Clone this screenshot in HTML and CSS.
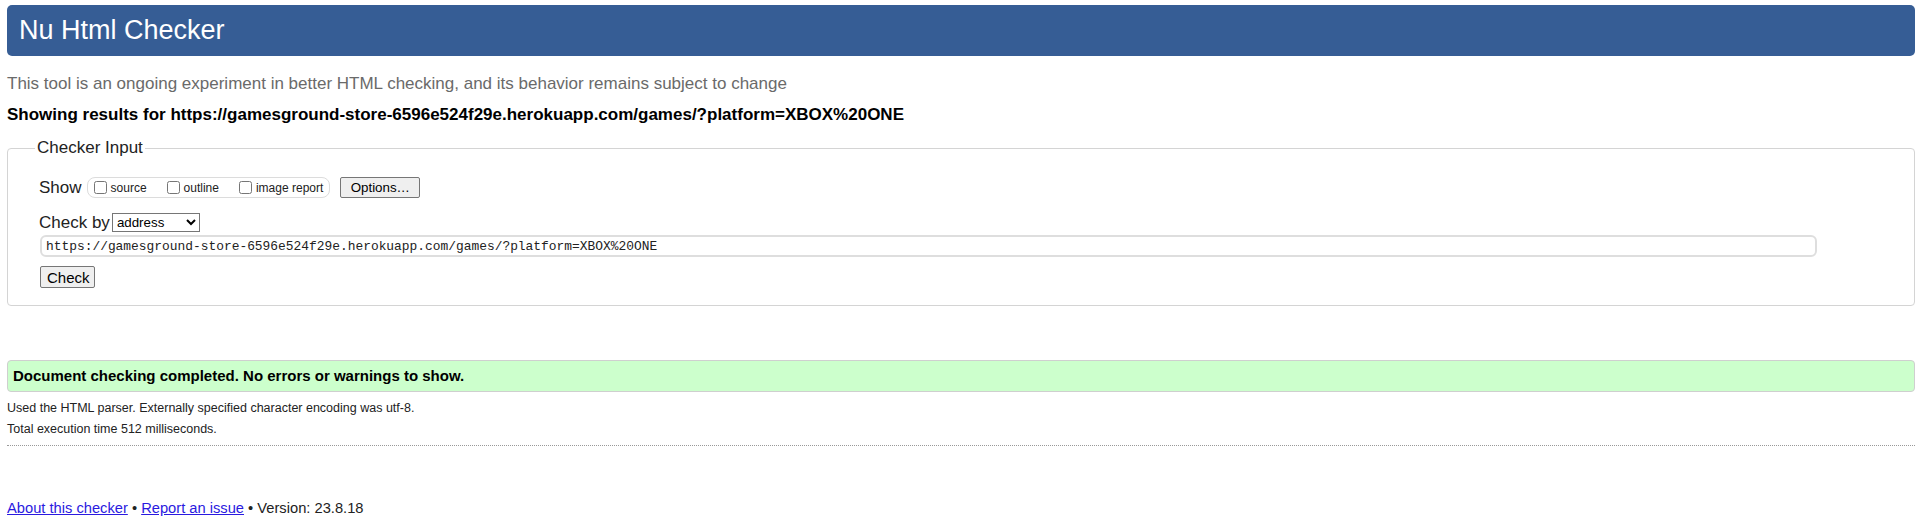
FILE: index.html
```html
<!DOCTYPE html>
<html lang="en">
<head>
<meta charset="utf-8">
<title>Nu Html Checker</title>
<link rel="stylesheet" href="styles.css">
</head>
<body>
<h1 class="title">Nu Html Checker</h1>
<p class="intro">This tool is an ongoing experiment in better HTML checking, and its behavior remains subject to change</p>
<p class="showing">Showing results for https://gamesground-store-6596e524f29e.herokuapp.com/games/?platform=XBOX%20ONE</p>
<form class="checker">
  <fieldset class="input-set">
    <legend class="legend">Checker Input</legend>
    <div class="row row-show">
      <span class="label">Show</span>
      <span class="show-group">
        <label class="opt"><input type="checkbox" class="cb">source</label>
        <label class="opt"><input type="checkbox" class="cb">outline</label>
        <label class="opt"><input type="checkbox" class="cb">image report</label>
      </span>
      <button type="button" class="btn btn-options">Options…</button>
    </div>
    <div class="row row-by">
      <span class="label">Check by</span>
      <select class="sel"><option>address</option></select>
    </div>
    <div class="row row-url">
      <input class="url" type="text" value="https://gamesground-store-6596e524f29e.herokuapp.com/games/?platform=XBOX%20ONE">
    </div>
    <div class="row row-check">
      <button type="button" class="btn btn-check">Check</button>
    </div>
  </fieldset>
</form>
<p class="success">Document checking completed. No errors or warnings to show.</p>
<p class="details">Used the HTML parser. Externally specified character encoding was utf-8.</p>
<p class="details">Total execution time 512 milliseconds.</p>
<hr class="sep">
<p class="footer"><a href="#">About this checker</a> • <a href="#">Report an issue</a> • Version: 23.8.18</p>
</body>
</html>
```
FILE: styles.css
```css
* { box-sizing: border-box; }
html, body { background: #fff; }
body {
  margin: 0;
  padding: 0 5px 0 7px;
  font-family: "Liberation Sans", Arial, sans-serif;
  font-size: 16px;
  color: #000;
}
.title {
  margin: 5px 0 0;
  height: 51px;
  line-height: 51px;
  padding: 0 12px;
  background: #365d95;
  color: #fff;
  font-size: 27px;
  font-weight: normal;
  border-radius: 5px;
}
.intro {
  margin: 18px 0 0;
  font-size: 17px;
  line-height: 20px;
  color: #6a6a6a;
}
.showing {
  margin: 11px 0 0;
  font-size: 17px;
  line-height: 20px;
  font-weight: bold;
}
.checker { margin: 13px 0 0; }
.input-set {
  margin: 0;
  border: 1px solid #d4d4d4;
  border-radius: 4px;
  padding: 19px 10px 17px 31px;
}
.legend {
  padding: 0 2px;
  margin-left: -4px;
  font-size: 17px;
  line-height: 20px;
  color: #222;
}
.row { display: flex; align-items: center; }
.label { font-size: 17px; line-height: 20px; color: #222; }
.row-show { height: 21px; }
.show-group {
  display: inline-flex;
  align-items: center;
  height: 21px;
  margin-left: 5px;
  padding: 0 6px 0 6px;
  border: 1px solid #dcdcdc;
  border-radius: 8px;
  font-size: 12px;
  color: #222;
}
.opt { display: inline-flex; align-items: center; margin-right: 20px; }
.opt:last-child { margin-right: 0; }
.cb { margin: 0 4px 0 0; width: 13px; height: 13px; }
.btn {
  font-family: "Liberation Sans", Arial, sans-serif;
  font-size: 13.333px;
  color: #000;
  background: #efefef;
  border: 1px solid #767676;
  border-radius: 2px;
  padding: 0 6px;
}
.btn-options { margin-left: 10px; width: 80px; height: 21px; }
.row-by { margin-top: 15px; height: 19px; }
.sel {
  margin-left: 2px;
  width: 88px;
  height: 19px;
  font-family: "Liberation Sans", Arial, sans-serif;
  font-size: 13.333px;
  color: #000;
  border: 1px solid #767676;
  border-radius: 0;
  background: #fff;
}
.row-url { margin-top: 3px; }
.url {
  margin-left: 1px;
  width: 1777px;
  height: 22px;
  padding: 0 5px 0 4px;
  border: 2px solid #dedede;
  border-radius: 6px;
  font-family: "Liberation Mono", "DejaVu Sans Mono", monospace;
  font-size: 12.9px;
  color: #222;
}
.row-check { margin-top: 9px; }
.btn-check { margin-left: 1px; width: 55px; height: 22px; font-size: 15px; }
.success {
  margin: 54px 0 0;
  height: 32px;
  line-height: 30px;
  padding: 0 5px;
  background: #ccffcc;
  border: 1px solid #cfcfcf;
  border-radius: 4px;
  font-size: 15px;
  font-weight: bold;
}
.details {
  margin: 0;
  font-size: 12.5px;
  line-height: 21px;
  color: #222;
}
.success + .details { margin-top: 6px; }
.sep {
  margin: 5px 0 0;
  border: 0;
  border-top: 1px dotted #999;
  height: 0;
}
.footer {
  margin: 52px 0 0;
  font-size: 14.7px;
  line-height: 20px;
  color: #222;
}
.footer a { color: #2a1ae0; }
```
